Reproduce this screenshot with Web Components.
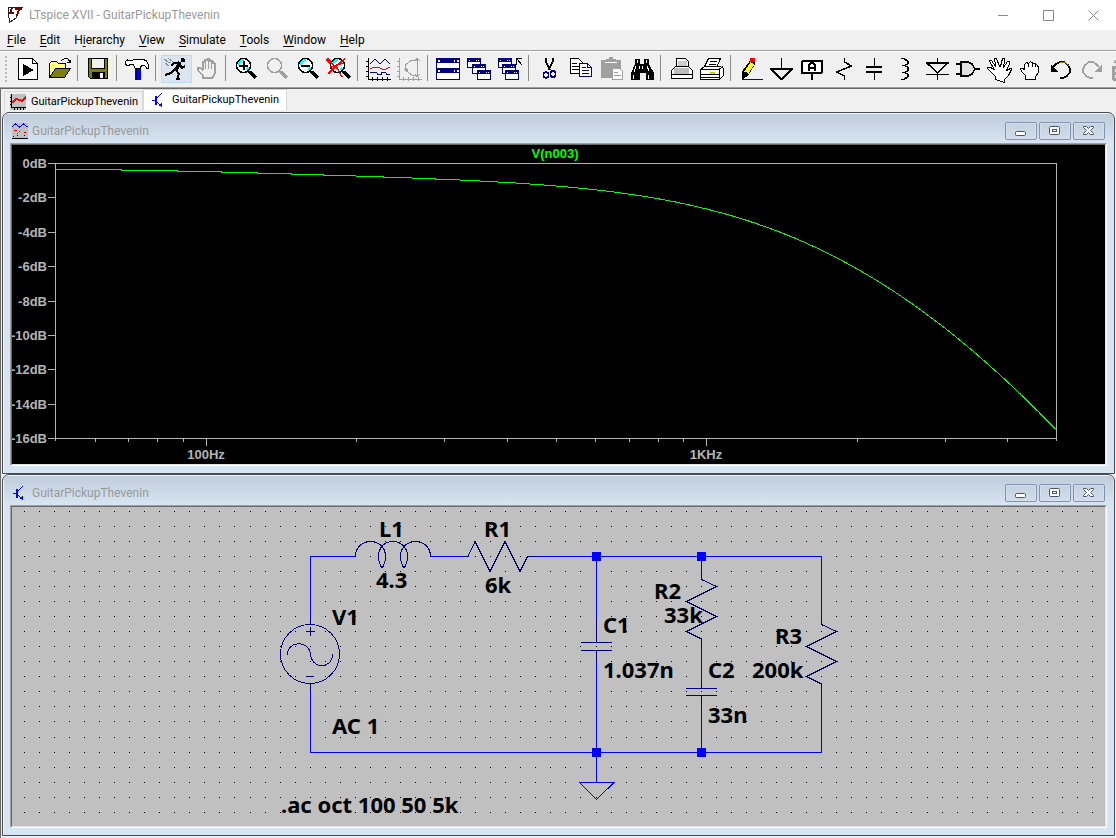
<!DOCTYPE html>
<html lang="en">
<head>
<meta charset="utf-8">
<title>LTspice XVII - GuitarPickupThevenin</title>
<style>
  html, body { margin: 0; height: 100%; }
  body { font: 12px/16px Roboto, "Open Sans", sans-serif; background: #f0f0f0; color: #000; }
</style>
</head>
<body>
<spice-app></spice-app>
<script>
const lens = (cx, c, inner, extra) => `<circle cx="${cx - 1}.5" cy="10.500" r="7" fill="${inner}" stroke="${c}" stroke-width="1.500"/><path d="M${cx + 4} 16l2 2" stroke="${c}" stroke-width="2"/><path d="M${cx + 6} 17l6 6" stroke="${c}" stroke-width="4"/>${extra}`;
const shine = cx => `<path d="M${cx - 5} 10v-2l3-3h2M${cx + 2} 15l2-2" stroke="#0ff" stroke-width="1.5"/>`;
const pane = (x, y) => `<rect x="${x}.5" y="${y}.5" width="13" height="9" fill="#fff" stroke="#000080"/><path d="M${x + 1} ${y + 2.5}h12" stroke="#000080" stroke-width="3"/><path d="M${x + 2} ${y + 2}h1m6 0h1m1 0h1" stroke="#fff"/>`;

const ICONS = {
  run: '<path d="M5.500 3.500h14l5 5v16h-19z" fill="#fff"/><path d="M19.500 3.500v5h5"/><path d="M10 9v12l11-6z" fill="#000" stroke="none"/>',
  open: '<path d="M5.500 21.500v-13l2-2h5l2 2h7v5" fill="#ffff80"/><path d="M5.500 22.500l6-9h15l-6 9z" fill="#808000"/><path d="M17.500 5.500l3-2h3l3 4m0-3v3h-4"/>',
  save: '<path d="M5.500 3.500h19v20h-17l-2-2z" fill="#808000"/><rect x="8.500" y="3.500" width="13" height="10" fill="#f0f0f0"/><path d="M9 17h12v6h-12z" fill="#000"/><path d="M17 18h3v5h-3z" fill="#fff" stroke="none"/>',
  hammer: '<path d="M13 12h6v13h-6z" fill="#0000ff" stroke="none"/><path d="M14.500 12v13" stroke="#000080"/><path d="M3.500 9.500v-3l2-1.500l4 1l3-2h8l4 2l2 4v4l-2-1l-2-3h-3l-1 3h-6l-1-4h-3l-2 2z" fill="#fff" stroke-width="1"/>',
  runner: '<path d="M3 4l4 3h3M7 3l5 4M4 8l4 3" stroke="#8a9299"/><path d="M20 3.500h3v3h-3z" fill="#000"/><path d="M19 7l-4 8" stroke-width="4"/><path d="M19 8h-6l-3 3M19 10l2 3l3-2M14 14l-4 4l-6 2M15 15l3 4l-2 5h3" stroke-width="2"/>',
  stop: '<path d="M10.500 23v-3l-5-5v-2h3l2 2v-8h2v-2h3v-1h2v2h3v2h2v11l-2 4z" fill="#f0f0f0" stroke="#a0a0a0" stroke-width="2"/><path d="M13.500 6v8M16.500 4v10M19.500 6v8" stroke="#a0a0a0"/>',
  zoomin: lens(13, '#000', '#fff', shine(13) + '<path d="M8 10.500h9M12.500 6v9" stroke-width="2"/>'),
  zoom: lens(13, '#a0a0a0', '#f0f0f0', '<path d="M9 9l2-2" stroke="#fff" stroke-width="2"/>'),
  zoomout: lens(13, '#000', '#fff', shine(13) + '<path d="M8 10.500h9" stroke-width="2"/>'),
  zoomfit: lens(14, '#000', '#fff', shine(14) + '<path d="M3 4l10 9l5 9M21 4l-8 6l-9 9" stroke="#f00" stroke-width="1.500"/><path d="M3 4l4 4" stroke="#f00" stroke-width="3"/><path d="M6 12l14-4" stroke="#f00"/>'),
  waves: '<path d="M5.500 3v21.500h22M3 6.500h2m-2 5h2m-2 5h2m-2 5h2M9.500 22v4m5-4v4m5-4v4m5-4v4" /><path d="M7 9l5-5l5 5l5-5l5 5" stroke="#000080"/><path d="M7 14l4-2h4l4 2h4l4-2" stroke="#f00"/><path d="M7 17.500h7v2h4v-2h5v2h4" stroke="#000080"/>',
  smith: '<g stroke="#a0a0a0"><path d="M5.500 3v21.500h22M3 6.500h2m-2 5h2m-2 5h2m-2 5h2M9.500 22v4m5-4v4m5-4v4m5-4v4M23.500 4v17M21 6l2-3l3 3M21 19l2 3l3-3"/><path d="M23 5h-5l-7 5v5l7 5h5M10 15l2-2l2 3"/></g>',
  tile: '<g stroke="#000080"><rect x="3.500" y="3.500" width="23" height="10" fill="#fff"/><path d="M4 5.500h22" stroke-width="4"/><rect x="3.500" y="13.500" width="23" height="11" fill="#fff"/><path d="M4 16h22" stroke-width="4"/></g><path d="M5 5.500h2m14 0h1m2 0h2M5 15.500h2m14 0h1m2 0h2" stroke="#fff" stroke-width="2"/>',
  cascade: pane(3, 3) + pane(8, 9) + pane(13, 15),
  closeall: pane(3, 3) + pane(7, 9) + pane(10, 15) + '<path d="M21.500 10v-6.500h5M22 4l5 6" />',
  cut: '<path d="M12 3v4l4 8M18.500 3v4l-4 8" stroke-width="2"/><g stroke="#000080" stroke-width="1.500"><ellipse cx="12" cy="20" rx="2.500" ry="3"/><ellipse cx="19" cy="19" rx="2.500" ry="3.500"/></g>',
  copy: '<path d="M5.500 3.500h8l4 4v11h-12z" fill="#fff"/><path d="M7 8.500h5M7 11.500h8M7 14.500h8"/><path d="M14.500 8.500h8l4 4v9h-12z" fill="#fff" stroke="#000080"/><path d="M22.500 8.500v4h4M17 12.500h4M17 15.500h7M17 18.500h7" stroke="#000080"/>',
  paste: '<path d="M5 5h20v18h-20z" fill="#a0a0a0" stroke="none"/><path d="M10 6v-2h3v-2h4v2h3v3z" fill="#a0a0a0" stroke="none"/><path d="M9 7.500h12" stroke="#fff"/><path d="M16.500 13.500h7l3 3v8h-10z" fill="#fff" stroke="#a0a0a0"/><path d="M18 17.500h4m-4 3h7" stroke="#a0a0a0"/>',
  find: '<path d="M8 4h5v5h4v-5h5v5l5 9v7h-8v-7h-6v7h-9v-7l4-9z" fill="#000" stroke="none"/><path d="M10.500 5v3M19.500 5v3M9 11l-2 6M20 11l2 5M12.500 11v3M6 20v4M21 20v4M15.500 11v3" stroke="#fff"/>',
  setup: '<path d="M10.500 12v-8.500h9l3 3v6" fill="#fff"/><path d="M12 6h9v6h-9z" fill="#ccc" stroke="none"/><path d="M5.500 23.500v-8l4-4h13l4 4v8z" fill="#fff"/><path d="M8 13h15v6h-15z" fill="#bcbcbc" stroke="none"/><path d="M5 19.500h22"/>',
  print: '<path d="M7.500 11.500l4-8h12l-4 9" fill="#fff"/><path d="M13 6.500h7M12 9.500h7"/><path d="M3.500 14.500l4-3h16l3 2v7l-4 4h-19z" fill="#fff"/><path d="M3 14.500h19l4-3M22.500 14v10M3 19.500h19M3 22.500h19"/><path d="M13 17.500h5" stroke="#cc0" stroke-width="2"/>',
  pencil: '<path d="M6 24.500h21" stroke="#0000c0"/><path d="M15 5l4 3l-7 12l-6 4l1-8z" fill="#000" stroke="#000"/><path d="M14.500 7l4 2.500l-6 9l-4-2z" fill="#ff0" stroke="none"/><circle cx="16.500" cy="5" r="2.500" fill="#f00" stroke="none"/>',
  ground: '<path d="M14.500 3v11"  stroke-width="1.500"/><path d="M3 14h23" stroke-width="2"/><path d="M4 14l10.500 10.500l10.500-10.500" stroke-width="1.500"/>',
  label: '<rect x="4" y="6" width="20" height="12" rx="1" fill="#fff" stroke-width="2"/><path d="M14 19v6" stroke-width="1.500"/><path d="M11 16v-6l2-2h2l2 2v6M12 12.500h5" stroke-width="2"/>',
  resistor: '<path d="M15.500 3v4l7 4l-15 6l8 4v4" stroke-width="1.500"/>',
  capacitor: '<path d="M14.500 3v9M14.500 17v8" stroke-width="1.500"/><path d="M6 12h16M6 17h16" stroke-width="2"/>',
  inductor: '<path d="M10 3.500h3l4 3v2l-3 2h-2h2l3 2v3l-3 2h-2h2l3 2v2l-4 3h-3" stroke-width="1.500"/>',
  diode: '<path d="M15.500 3v5M15.500 19v6" stroke-width="1.500"/><path d="M4 8h23M4 19.500h23" stroke-width="1.500"/><path d="M6 9l9.500 9l9.500-9" stroke-width="1.500"/>',
  gate: '<path d="M3 9h5M3 19h5M22 14h5" stroke-width="1.500"/><path d="M8 7h7l4 2l3 5l-3 5l-4 2h-7z" fill="#e0e0e0" stroke-width="1.500"/>',
  move: '<path d="M11.500 24.500v-3l-4-4l-4-4v-1h3l4 2l-5-8v-1h2l4 6v-2l-1-6h2l3 8h1l2-8h2v3l-1 6l4-6h2v2l-3 7l4-2h1v1l-3 6l-4 4v3z" fill="#fff"/>',
  drag: '<path d="M10.500 24.500v-4l-4-4l-1-3h2l2 1v-5l2-2l2 1l2-2l3 2h2l2 2l1 2v5l-3 4v3z" fill="#fff"/><path d="M13.500 8v4m4-4v4m3-3v3"/>',
  undo: '<path d="M7 12l3-3l4-2h4l4 3l2 4v3l-3 4l-4 2h-3" stroke-width="1.500"/><path d="M5 10v7h7z" fill="#000" stroke="none"/><path d="M14 7h5l4 4" stroke="#880"/>',
  redo: '<g stroke="#a0a0a0"><path d="M22 12l-3-3l-3-2h-4l-4 3l-2 4v3l3 4l4 2h3" stroke-width="1.500"/><path d="M25 9v8h-8z" fill="#a0a0a0" stroke="none"/></g>',
  rotate: '<path d="M13 12h-8v12h8M5 18h7M7 8l3-4" stroke="#a0a0a0" stroke-width="3"/>'
};

const APP_GLYPHS = {
  app: '<path d="M1 0v6l1 9l7-5l3-6z" fill="#fff" stroke="none"/><path d="M1 0l.5 6l1 9.500l7-5l1-3M1 .5h15" stroke="#222"/><path d="M5 1l-2 5h4M8 2h7M12 2l-2 7" stroke="#800000" stroke-width="2"/>',
  chart: '<path d="M0 0h16v16h-16z" fill="#c0c0c0"/><path d="M1.500 0v13.500h14M0 3.500h1m-1 4h1m-1 3h1M4.500 14v2m3-2v2m3-2v2m3-2v2" stroke="#000"/><path d="M2 9l4-4l4 1l2 1l4-4" stroke="#f00" stroke-width="2"/>',
  traces: '<path d="M0 0h16v16h-16z" fill="#c0c0c0"/><path d="M0 4l3.500-3l4 3l4-3l4 3" stroke="#00f"/><path d="M0 15.500h16" stroke="#000"/><path d="M2 7.500h3m2 1h1m4 1h2M5 10.500h1" stroke="#f00"/><path d="M1 13.500h1m3-1h1m6 0h1m0-3h1" stroke="#00f"/>',
  transistor: '<path d="M1 8.500h4" stroke="#00f"/><path d="M5 4v9" stroke="#00f" stroke-width="2"/><path d="M6 6l5-5M6 10l5 5" stroke="#00f"/><path d="M7 14h4v-4z" fill="#00f"/>'
};

function define(name, html, setup) {
  const t = document.createElement('template');
  t.innerHTML = html;
  customElements.define(name, class extends HTMLElement {
    connectedCallback() {
      if (this.shadowRoot) return;
      this.attachShadow({ mode: 'open' }).append(t.content.cloneNode(true));
      if (setup) setup(this, this.shadowRoot);
    }
  });
}

function watchSize(host, draw) {
  draw();
  new ResizeObserver(draw).observe(host);
}

define('app-glyph', `<style>:host{display:block;width:16px;height:16px;flex:none}svg{display:block}</style>
<svg width="16" height="16" fill="none" shape-rendering="crispEdges" aria-hidden="true"></svg>`,
  (host, root) => { root.querySelector('svg').innerHTML = APP_GLYPHS[host.getAttribute('name')] || ''; });

define('tool-button', `<style>
:host{display:block;flex:none}
button{display:block;width:31px;height:28px;margin:0;padding:0;border:0;background:none}
:host([pressed]) button{background:#d9e6f2;box-shadow:inset 0 0 0 1px #bcdcf4}
svg{display:block}
</style><button type="button"><svg width="31" height="28" fill="none" stroke="#000" stroke-linejoin="round" shape-rendering="crispEdges"></svg></button>`,
  (host, root) => {
    root.querySelector('svg').innerHTML = ICONS[host.getAttribute('name')];
    root.querySelector('button').setAttribute('aria-label', host.getAttribute('name'));
  });

define('tool-separator', `<style>:host{display:block;flex:none;box-sizing:border-box;width:8px;height:26px;padding-left:2px}i{display:block;width:1px;height:100%;background:#8c8c8c}</style><i></i>`);

define('title-bar', `<style>
:host{display:flex;height:30px;background:#fff;color:#999;align-items:center;padding-left:7px}
h1{flex:1;margin:0 0 0 6px;font:inherit;white-space:nowrap}
button{width:45px;height:30px;padding:0;border:0;background:none;display:grid;place-items:center}
svg{stroke:#888;fill:none}
</style>
<app-glyph name="app"></app-glyph><h1><slot></slot></h1>
<button aria-label="Minimize"><svg width="11" height="11"><path d="M0 5.500h10"/></svg></button>
<button aria-label="Maximize"><svg width="11" height="11"><path d="M.5 .5h10v10h-10z"/></svg></button>
<button aria-label="Close"><svg width="11" height="11"><path d="M.5 .5l10 10m0-10l-10 10"/></svg></button>`);

define('menu-bar', `<style>
:host{display:flex;height:20px;gap:14px;padding-left:7px;align-items:center}
button{font:inherit;color:inherit;border:0;background:none;padding:0}
u{text-underline-offset:2px}
</style>
<button><u>F</u>ile</button><button><u>E</u>dit</button><button>H<u>i</u>erarchy</button><button><u>V</u>iew</button><button><u>S</u>imulate</button><button><u>T</u>ools</button><button><u>W</u>indow</button><button><u>H</u>elp</button>`);

define('tool-bar', `<style>
:host{display:flex;box-sizing:border-box;height:37px;overflow:hidden;padding:4px 0 0 5px;border-top:1px solid #a0a0a0;box-shadow:inset 0 1px #fff}
.grip{flex:none;width:2px;height:26px;margin:1px 6px 0 0;background:repeating-linear-gradient(#bbb 0 2px,transparent 2px 4px)}
</style><div class="grip"></div><slot></slot>`);

define('doc-tab', `<style>
:host{display:block;flex:none}
button{display:flex;align-items:center;box-sizing:border-box;height:20px;margin-top:2px;padding:0 4px 0 5px;gap:5px;border:1px solid #d9d9d9;border-bottom:0;background:#f0f0f0;color:#000;font:11px/16px Roboto,sans-serif;white-space:nowrap}
:host([selected]) button{height:21px;margin-top:0;padding:0 7px;background:#fff}
</style><button role="tab"><slot name="icon"></slot><span><slot></slot></span></button>`);

define('mdi-window', `<style>
:host{display:flex;flex-direction:column;flex:1 0 260px;box-sizing:border-box;margin:0 1px 0 0;border:1px solid #4a4a4f;border-radius:7px 7px 0 0;background:#d7e4f2;padding:0 7px 7px;overflow:hidden;box-shadow:inset 1px 1px #f4f8fc}
header{display:flex;align-items:center;box-sizing:border-box;height:29px;flex:none;margin:1px -6px 0;padding:4px 8px 0 8px;gap:4px;background:linear-gradient(#bfcddb,#d7e4f2);color:#999}
h2{flex:1;margin:0;font:inherit}
.keys{display:flex;gap:2px}
button{box-sizing:border-box;width:32px;height:18px;padding:0;border:1px solid #8591b0;border-radius:2px;background:linear-gradient(#c4d1df,#d0ddea);box-shadow:inset 0 0 0 1px #d5e0ec;display:grid;place-items:center}
svg{display:block;fill:#fff;stroke:#4c5468}
.frame{flex:1;min-height:0;display:grid;border:1px solid;border-color:#a0a0a0 #fff #fff #a0a0a0}
.inner{display:grid;min-width:0;min-height:0;border:1px solid;border-color:#696969 #e3e3e3 #e3e3e3 #696969}
</style>
<header><slot name="icon"></slot><h2><slot name="title"></slot></h2><div class="keys">
<button aria-label="Minimize"><svg width="12" height="10"><rect x=".5" y="5.500" width="10" height="4" rx="1"/></svg></button>
<button aria-label="Restore"><svg width="12" height="10"><rect x=".5" y=".5" width="10" height="8" rx="1"/><rect x="3.500" y="3.500" width="4" height="2"/></svg></button>
<button aria-label="Close"><svg width="12" height="10"><path d="M.5 .5h3l2 2l2-2h3v1l-3 3l3 3v1h-3l-2-2l-2 2h-3v-1l3-3l-3-3z"/></svg></button>
</div></header>
<div class="frame"><div class="inner"><slot></slot></div></div>`);

define('bode-plot', `<style>
:host{display:grid;min-width:0;min-height:0;background:#000;overflow:hidden;contain:size}
svg{display:block;width:100%;height:100%;min-width:0;min-height:0;font:bold 13px "Liberation Sans",Arial,sans-serif}
</style><svg role="img" aria-label="Frequency response"></svg>`, (host, root) => {
  const svg = root.querySelector('svg');
  /* Pickup model: V1 - L1 - R1 into C1 || (R2 + C2) || R3 */
  const gain = f => {
    const w = 2 * Math.PI * f, r = 6000, x = w * 4.3, xc = -1 / (w * 33e-9), m = 33000 ** 2 + xc ** 2;
    const g = 1 / 200000 + 33000 / m, b = w * 1.037e-9 - xc / m;
    return -20 * Math.log10(Math.hypot(1 + r * g - x * b, r * b + x * g));
  };
  watchSize(host, () => {
    const W = host.clientWidth, H = host.clientHeight;
    if (W < 100 || H < 60) return;
    const x0 = 43, x1 = W - 49, y0 = 18, y1 = H - 26;
    const X = f => x0 + (x1 - x0) * Math.log10(f / 50) / 2, Y = d => y0 - (y1 - y0) * d / 16;
    let axis = `M${x0}.5 ${y1 + 3}V${y0}.5H${x1}.5V${y1 + 3}M${x0}.5 ${y1}.5H${x1}`, text = '', curve = '';
    for (let d = 0; d >= -16; d -= 2) {
      const y = Math.round(Y(d));
      axis += `M${x0 - 7} ${y}.5h7`;
      text += `<text x="${x0 - 8}" y="${y + 5}" text-anchor="end">${d}dB</text>`;
    }
    for (const f of [60, 70, 80, 90, 100, 200, 300, 400, 500, 600, 700, 800, 900, 1000, 2000, 3000, 4000]) {
      const major = f === 100 || f === 1000, x = Math.round(X(f));
      axis += `M${x}.5 ${y1}v${major ? 8 : 4}`;
      if (major) text += `<text x="${x}" y="${y1 + 21}" text-anchor="middle">${f === 100 ? '100Hz' : '1KHz'}</text>`;
    }
    for (let x = x0; x <= x1; x += 2) {
      const f = 50 * 10 ** (2 * (x - x0) / (x1 - x0));
      curve += `${x === x0 ? 'M' : 'L'}${x + .5} ${(Y(gain(f)) + .5).toFixed(1)}`;
    }
    svg.innerHTML = `<g shape-rendering="crispEdges" fill="none"><path d="${axis}" stroke="#b4b4b4"/><path d="${curve}" stroke="#0f0"/></g><g fill="#b4b4b4">${text}</g><text x="${Math.round((x0 + x1) / 2) - 1}" y="13" text-anchor="middle" fill="#0f0">V(n003)</text>`;
  });
});

define('circuit-sheet', `<style>
:host{display:grid;min-width:0;min-height:0;background:#c0c0c0;overflow:hidden;contain:size}
svg{display:block;width:100%;height:100%;min-width:0;min-height:0;font:bold 22px "Noto Sans",sans-serif}
</style><svg role="img" aria-label="Schematic"><g transform="translate(-12 -507)">
<g fill="none" shape-rendering="crispEdges">
<path class="grid" stroke="#000"/>
<path stroke="#00f" d="M355 556.500H310.500V617M431 556.500h30M535 556.500H821.500V617M310.500 691V752.500H821.500V691M596.500 556v61M596.500 662V782M701.500 556v16M701.500 646v35M701.500 707v45M579 782.500h35l-17.500 17l-17-17"/>
<path stroke="#000080" d="M310.500 617v7M310.500 684v7M461 556.500h7l7-15l15 30l15-30l15 30l7.500-15h8M596.500 617v25M581 642.500h31M581 650.500h31M596.500 651v11M701.500 572v7.500l15 7l-30 15l30 15l-30 15l15 7.500v7M701.500 681v7M686 688.500h31M686 695.500h31M701.500 696v11M821.500 617v7.500l15 7l-30 15l30 15l-30 15l15 7.500v7M306 631.500h9M310.500 627v9M306 676.500h8"/>
<path stroke="#000080" d="M355.500 556.500C355.500 536.500 385.500 536.500 385.500 556.500C385.500 562 383 567.500 382 567.500C381 567.500 378.500 562 378.500 556.500C378.500 536.500 407.500 536.500 407.500 556.500C407.500 562 405 567.500 404 567.500C403 567.500 400.500 562 400.500 556.500C400.500 536.500 430.500 536.500 430.500 556.500"/>
<circle cx="310" cy="654" r="29.500" stroke="#000080"/>
<path stroke="#000080" d="M287.500 655C287.500 640 309 640 310.500 654.500C312 669.500 332.500 669.500 332.500 654"/>
</g>
<path fill="#00f" d="M592 552h9v9h-9zM697 552h9v9h-9zM592 748h9v9h-9zM697 748h9v9h-9z"/>
<text x="379" y="537">L1</text><text x="376" y="588">4.3</text><text x="484" y="537">R1</text><text x="485" y="593">6k</text>
<text x="332" y="625">V1</text><text x="332" y="734">AC 1</text><text x="281" y="813">.ac oct 100 50 5k</text>
<text x="603" y="633">C1</text><text x="603" y="678">1.037n</text><text x="654" y="599">R2</text><text x="664" y="623">33k</text>
<text x="708" y="678">C2</text><text x="708" y="723">33n</text><text x="775" y="644">R3</text><text x="752" y="678">200k</text>
</g></svg>`, (host, root) => {
  const grid = root.querySelector('.grid'), step = i => Math.floor(i * 15.045 + .33);
  watchSize(host, () => {
    let d = '';
    for (let j = 0; step(j) < host.clientHeight; j++)
      for (let i = 0; step(i) < host.clientWidth - 8; i++) d += `M${24 + step(i)} ${511 + step(j)}.5h1`;
    grid.setAttribute('d', d);
  });
});

define('spice-app', `<style>
:host{display:flex;flex-direction:column;min-height:100vh}
main{display:flex;flex-direction:column;flex:1;border:solid #696969;border-width:1px 0 0 1px;box-shadow:0 -1px #a0a0a0;margin-top:1px;padding:0 0 2px 1px}
.tabs{display:flex;height:23px;padding-left:2px;box-sizing:border-box;flex:none}
</style>
<title-bar>LTspice XVII - GuitarPickupThevenin</title-bar>
<menu-bar></menu-bar>
<tool-bar></tool-bar>
<main>
<div class="tabs" role="tablist"><doc-tab><app-glyph slot="icon" name="chart"></app-glyph>GuitarPickupThevenin</doc-tab><doc-tab selected><app-glyph slot="icon" name="transistor"></app-glyph>GuitarPickupThevenin</doc-tab></div>
<mdi-window><app-glyph slot="icon" name="traces"></app-glyph><span slot="title">GuitarPickupThevenin</span><bode-plot></bode-plot></mdi-window>
<mdi-window><app-glyph slot="icon" name="transistor"></app-glyph><span slot="title">GuitarPickupThevenin</span><circuit-sheet></circuit-sheet></mdi-window>
</main>`, (host, root) => {
  const groups = ['run open', 'save', 'hammer', 'runner stop', 'zoomin zoom zoomout zoomfit', 'waves smith', 'tile cascade closeall', 'cut copy paste find', 'setup print', 'pencil ground label resistor capacitor inductor diode gate move drag undo redo rotate'];
  root.querySelector('tool-bar').innerHTML = groups.map(g => g.split(' ').map(n => `<tool-button name="${n}"${n === 'runner' ? ' pressed' : ''}></tool-button>`).join('')).join('<tool-separator></tool-separator>');
});
</script>
</body>
</html>
